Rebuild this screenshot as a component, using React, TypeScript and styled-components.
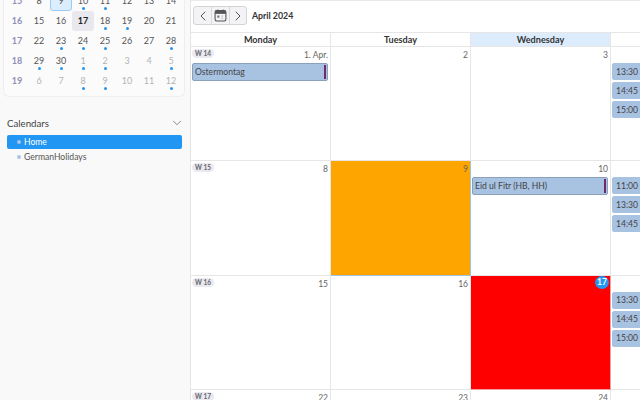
import React from "react";
import styled, { createGlobalStyle } from "styled-components";
import { ChevronDown, ChevronLeft, ChevronRight } from "lucide-react";

const Global = createGlobalStyle`
  html, body {
    margin: 0;
    padding: 0;
    background: #fff;
    overflow: hidden;
  }
  * {
    box-sizing: border-box;
  }
`;

const Root = styled.div`
  display: flex;
  width: 640px;
  height: 400px;
  overflow: hidden;
  font-family: Lato, "Noto Sans", sans-serif;
  color: #333;
`;

const Sidebar = styled.aside`
  flex: 0 0 190px;
  height: 400px;
  background: #f9f9f9;
  overflow: hidden;
  padding: 0 5px 0 3px;
`;

const MiniCard = styled.div`
  margin-top: -9px;
  height: 106px;
  background: #fbfbfb;
  border: 1px solid #eeeeee;
  border-top: 0;
  border-radius: 0 0 6px 6px;
  display: grid;
  grid-template-columns: 22px repeat(7, 22px);
  grid-auto-rows: 20px;
  padding-left: 2px;
`;

const WeekNo = styled.div`
  display: flex;
  align-items: center;
  justify-content: center;
  font-size: 9px;
  font-weight: 700;
  color: #8e8eb8;
  padding-bottom: 1px;
`;

const Day = styled.div<{ $muted?: boolean; $today?: boolean; $selected?: boolean; $dot?: boolean }>`
  position: relative;
  display: flex;
  align-items: center;
  justify-content: center;
  font-size: 9px;
  padding-bottom: 1px;
  border-radius: 3px;
  color: ${(p) => (p.$muted ? "#b4b4b4" : "#555")};
  font-weight: ${(p) => (p.$today ? 700 : 400)};
  background: ${(p) => (p.$today ? "#e8e8ee" : p.$selected ? "#dcedfd" : "transparent")};
  border: 1px solid ${(p) => (p.$selected ? "#98ccf8" : "transparent")};
  ${(p) => p.$today && "color: #222;"}
  &::after {
    content: "";
    display: ${(p) => (p.$dot ? "block" : "none")};
    position: absolute;
    left: 50%;
    bottom: 0;
    width: 3px;
    height: 3px;
    margin-left: -1.5px;
    border-radius: 50%;
    background: #2196f3;
  }
`;

const SectionHead = styled.div`
  display: flex;
  align-items: center;
  justify-content: space-between;
  margin-top: 19px;
  padding: 0 1px 0 4px;
  height: 14px;
  font-size: 9.7px;
  color: #444;
`;

const CalendarList = styled.ul`
  list-style: none;
  margin: 5px 0 0;
  padding: 0 0 0 4px;
`;

const CalendarItem = styled.li<{ $active?: boolean }>`
  display: flex;
  align-items: center;
  gap: 3px;
  height: 14px;
  width: 175px;
  padding-left: 10px;
  margin-bottom: 1px;
  border-radius: 2px;
  font-size: 8.6px;
  background: ${(p) => (p.$active ? "#2196f3" : "transparent")};
  color: ${(p) => (p.$active ? "#fff" : "#555")};
`;

const CalendarDot = styled.span`
  width: 4px;
  height: 4px;
  border-radius: 50%;
  background: #a9c4e6;
`;

const Main = styled.main`
  flex: 1;
  min-width: 0;
  height: 400px;
  border-top: 1px solid #eaeaea;
  border-left: 1px solid #e4e4e4;
  background: #fff;
  overflow: hidden;
`;

const Toolbar = styled.div`
  display: flex;
  align-items: center;
  gap: 5px;
  height: 31px;
  padding: 0 0 2px 2px;
`;

const ButtonGroup = styled.div`
  display: flex;
  height: 19px;
  border: 1px solid #d4d4d8;
  border-radius: 3px;
  background: #f3f3f5;
`;

const NavButton = styled.button`
  display: flex;
  align-items: center;
  justify-content: center;
  width: 17.3px;
  padding: 0;
  border: 0;
  background: transparent;
  color: #555;
  & + & {
    border-left: 1px solid #d9d9dd;
  }
`;

const MonthTitle = styled.div`
  font-size: 8.8px;
  font-weight: 700;
  color: #333;
`;

const MonthGrid = styled.div`
  display: grid;
  grid-template-columns: repeat(7, 140px);
  grid-template-rows: 14px repeat(4, 114.33px);
  border-top: 1px solid #e6e6e6;
`;

const HeadCell = styled.div<{ $today?: boolean }>`
  display: flex;
  align-items: center;
  justify-content: center;
  padding-bottom: 1px;
  font-size: 9.1px;
  font-weight: 700;
  color: #333;
  background: ${(p) => (p.$today ? "#dcecfd" : "#fff")};
  border-bottom: 1px solid #e6e6e6;
  border-right: 1px solid #e6e6e6;
`;

const Cell = styled.div<{ $bg?: string; $outline?: string }>`
  position: relative;
  display: flex;
  flex-direction: column;
  padding: 16px 2px 0 1px;
  background: ${(p) => p.$bg || "#fff"};
  border-right: 1px solid ${(p) => p.$outline || "#e6e6e6"};
  border-bottom: 1px solid ${(p) => p.$outline || "#e6e6e6"};
`;

const WeekBadge = styled.span`
  position: absolute;
  left: 1px;
  top: 2px;
  height: 9px;
  padding: 0 3px;
  border-radius: 5px;
  background: #e9e9f2;
  font-size: 6.5px;
  line-height: 9px;
  font-weight: 700;
  color: #666;
`;

const DayNumber = styled.span`
  position: absolute;
  right: 2px;
  top: 2px;
  font-size: 8.5px;
  line-height: 13px;
  color: #666;
`;

const TodayBadge = styled.span`
  position: absolute;
  right: 1px;
  top: 0;
  width: 14px;
  height: 13px;
  border-radius: 50%;
  background: #2196f3;
  color: #fff;
  font-size: 8.5px;
  font-weight: 700;
  line-height: 13px;
  text-align: center;
`;

const Appointment = styled.div<{ $allDay?: boolean }>`
  position: relative;
  display: flex;
  align-items: center;
  height: ${(p) => (p.$allDay ? 18 : 17)}px;
  flex: none;
  padding-left: ${(p) => (p.$allDay ? 2 : 3)}px;
  border-radius: 2px;
  background: #a8c2e2;
  border: 1px solid ${(p) => (p.$allDay ? "#8aa0bc" : "#a8c2e2")};
  font-size: 8.6px;
  color: #444;
  white-space: nowrap;
  overflow: hidden;
  &::after {
    content: "";
    display: ${(p) => (p.$allDay ? "block" : "none")};
    position: absolute;
    right: 1px;
    top: 1px;
    bottom: 1px;
    width: 2px;
    background: #70286e;
  }
`;

const AppointmentStack = styled.div`
  display: flex;
  flex-direction: column;
  gap: 2px;
`;

const CalendarIcon = () => (
  <svg width="13" height="13" viewBox="0 0 12 12" fill="none">
    <rect x="1" y="1.5" width="10" height="9.5" rx="1.5" stroke="#555" strokeWidth="1" />
    <rect x="1" y="1.5" width="10" height="3" fill="#555" />
    <rect x="3" y="0.5" width="1" height="2" fill="#555" />
    <rect x="8" y="0.5" width="1" height="2" fill="#555" />
    <rect x="3" y="6" width="2" height="2" fill="#777" />
    <rect x="7" y="6" width="1" height="1" fill="#999" />
    <rect x="7" y="8" width="1" height="1" fill="#999" />
  </svg>
);

type MiniDay = { d: number; muted?: boolean; dot?: boolean; today?: boolean; selected?: boolean };

const miniWeeks: { week: number; days: MiniDay[] }[] = [
  {
    week: 15,
    days: [
      { d: 8 },
      { d: 9, selected: true },
      { d: 10, dot: true },
      { d: 11, dot: true },
      { d: 12 },
      { d: 13 },
      { d: 14 },
    ],
  },
  {
    week: 16,
    days: [
      { d: 15 },
      { d: 16 },
      { d: 17, today: true },
      { d: 18, dot: true },
      { d: 19, dot: true },
      { d: 20 },
      { d: 21 },
    ],
  },
  {
    week: 17,
    days: [
      { d: 22 },
      { d: 23, dot: true },
      { d: 24, dot: true },
      { d: 25, dot: true },
      { d: 26 },
      { d: 27 },
      { d: 28, dot: true },
    ],
  },
  {
    week: 18,
    days: [
      { d: 29, dot: true },
      { d: 30, dot: true },
      { d: 1, muted: true, dot: true },
      { d: 2, muted: true, dot: true },
      { d: 3, muted: true },
      { d: 4, muted: true },
      { d: 5, muted: true, dot: true },
    ],
  },
  {
    week: 19,
    days: [
      { d: 6, muted: true },
      { d: 7, muted: true },
      { d: 8, muted: true, dot: true },
      { d: 9, muted: true, dot: true },
      { d: 10, muted: true },
      { d: 11, muted: true },
      { d: 12, muted: true, dot: true },
    ],
  },
];

const weekdays = ["Monday", "Tuesday", "Wednesday", "Thursday", "Friday", "Saturday", "Sunday"];

type Row = {
  week: number;
  cells: { label: string; bg?: string; outline?: string; today?: boolean; allDay?: string; times?: string[] }[];
};

const rows: Row[] = [
  {
    week: 14,
    cells: [
      { label: "1. Apr.", allDay: "Ostermontag" },
      { label: "2" },
      { label: "3" },
      { label: "4", times: ["13:30 Kurs", "14:45 Yoga", "15:00 Kurs"] },
    ],
  },
  {
    week: 15,
    cells: [
      { label: "8" },
      { label: "9", bg: "#ffa500", outline: "#9cc3e6" },
      { label: "10", allDay: "Eid ul Fitr (HB, HH)" },
      { label: "11", times: ["11:00 Kurs", "13:30 Kurs", "14:45 Yoga"] },
    ],
  },
  {
    week: 16,
    cells: [
      { label: "15" },
      { label: "16" },
      { label: "17", bg: "#ff0000", outline: "#f0a0a0", today: true },
      { label: "18", times: ["13:30 Kurs", "14:45 Yoga", "15:00 Kurs"] },
    ],
  },
  {
    week: 17,
    cells: [{ label: "22" }, { label: "23" }, { label: "24" }, { label: "25" }],
  },
];

export default function App() {
  return (
    <Root>
      <Global />
      <Sidebar>
        <MiniCard>
          {miniWeeks.map((w) => (
            <React.Fragment key={w.week}>
              <WeekNo>{w.week}</WeekNo>
              {w.days.map((day) => (
                <Day
                  key={`${w.week}-${day.d}`}
                  $muted={day.muted}
                  $dot={day.dot}
                  $today={day.today}
                  $selected={day.selected}
                >
                  {day.d}
                </Day>
              ))}
            </React.Fragment>
          ))}
        </MiniCard>
        <SectionHead>
          Calendars
          <ChevronDown size={14} strokeWidth={1.3} color="#666" />
        </SectionHead>
        <CalendarList>
          <CalendarItem $active>
            <CalendarDot />
            Home
          </CalendarItem>
          <CalendarItem>
            <CalendarDot />
            GermanHolidays
          </CalendarItem>
        </CalendarList>
      </Sidebar>
      <Main>
        <Toolbar>
          <ButtonGroup>
            <NavButton>
              <ChevronLeft size={16} strokeWidth={1.5} />
            </NavButton>
            <NavButton>
              <CalendarIcon />
            </NavButton>
            <NavButton>
              <ChevronRight size={16} strokeWidth={1.5} />
            </NavButton>
          </ButtonGroup>
          <MonthTitle>April 2024</MonthTitle>
        </Toolbar>
        <MonthGrid>
          {weekdays.map((name) => (
            <HeadCell key={name} $today={name === "Wednesday"}>
              {name}
            </HeadCell>
          ))}
          {rows.map((row) => (
            <React.Fragment key={row.week}>
              {row.cells.map((c, i) => (
                <Cell key={c.label} $bg={c.bg} $outline={c.outline}>
                  {i === 0 && <WeekBadge>W {row.week}</WeekBadge>}
                  {c.today ? <TodayBadge>{c.label}</TodayBadge> : <DayNumber>{c.label}</DayNumber>}
                  {c.allDay && <Appointment $allDay>{c.allDay}</Appointment>}
                  {c.times && (
                    <AppointmentStack>
                      {c.times.map((t) => (
                        <Appointment key={t}>{t}</Appointment>
                      ))}
                    </AppointmentStack>
                  )}
                </Cell>
              ))}
              <Cell />
              <Cell />
              <Cell />
            </React.Fragment>
          ))}
        </MonthGrid>
      </Main>
    </Root>
  );
}
